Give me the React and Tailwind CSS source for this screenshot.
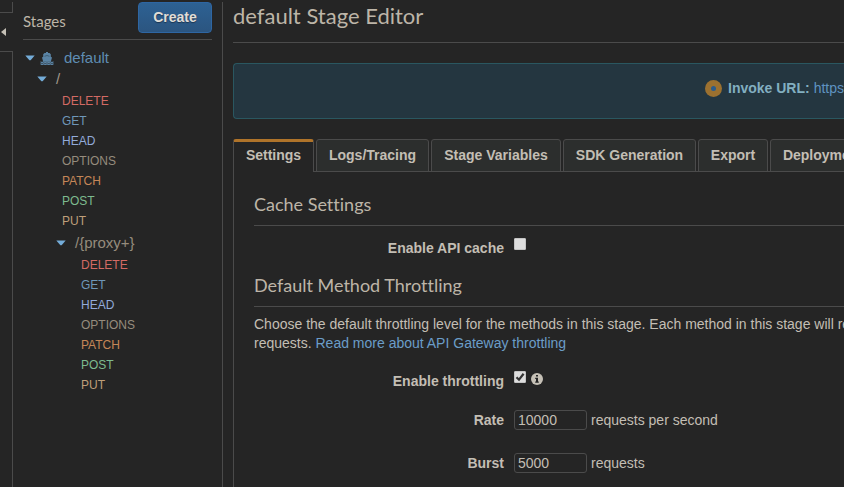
import React from "react";

const METHODS = [
  ["DELETE", "text-[#d36a64]"],
  ["GET", "text-[#6f97b8]"],
  ["HEAD", "text-[#92abda]"],
  ["OPTIONS", "text-[#958c7d]"],
  ["PATCH", "text-[#c58758]"],
  ["POST", "text-[#7dbb8f]"],
  ["PUT", "text-[#bf9f7a]"],
];

function Caret() {
  return (
    <svg width="10" height="6" viewBox="0 0 10 6" className="shrink-0">
      <path d="M0.3 0.4h9.4L5.6 5.2H4.4z" fill="#74acd8" />
    </svg>
  );
}

function Ship() {
  return (
    <svg width="14" height="13" viewBox="0 0 14 13" className="shrink-0" fill="#5a84a5">
      <path d="M6 0h2v1h1.5l1.3 1.2v2.6l1.2.8-1.2 4.2H3.2L2 5.6l1.2-.8V2.2L4.500 1H6z" />
      <path d="M.5 9.2q1.6 1 3.2 0 1.6 1 3.3 0 1.6 1 3.3 0 1.6 1 3.2 0v1.3q-1.6 1-3.2 0-1.7 1-3.3 0-1.7 1-3.3 0-1.6 1-3.2 0z" />
      <path d="M.5 11.100q1.6 1 3.2 0 1.6 1 3.3 0 1.6 1 3.3 0 1.6 1 3.2 0v1.4q-1.6 1-3.2 0-1.7 1-3.3 0-1.7 1-3.3 0-1.6 1-3.2 0z" />
      <path d="M4.500 4.300L7 3.500l2.500.8" fill="none" stroke="#2f4454" strokeWidth=".6" />
    </svg>
  );
}

function Methods({ indent }) {
  return (
    <ul className={indent}>
      {METHODS.map(([name, color]) => (
        <li key={name} className={`h-5 text-[12px] leading-5 ${color}`}>{name}</li>
      ))}
    </ul>
  );
}

function Tab({ children, active, width }) {
  return active ? (
    <div className={`${width} h-[33px] shrink-0 rounded-t-[3px] border-x border-t-[3px] border-x-[#4b4b4b] border-t-[#b0742a] bg-[#252525] pt-[3px] text-center leading-5`}>
      {children}
    </div>
  ) : (
    <div className={`${width} h-[33px] shrink-0 rounded-t-[3px] border border-[#4b4b4b] bg-[#2c2e2d] pt-[5px] text-center leading-5`}>
      {children}
    </div>
  );
}

function Heading({ children, className }) {
  return (
    <h2 className={`border-b border-[#4b4b4b] font-['Lato',sans-serif] text-[18px] text-[#bdb5a8] [font-variant-ligatures:none] ${className}`}>
      {children}
    </h2>
  );
}

function Checkbox({ checked }) {
  return (
    <span className="block size-[12px] shrink-0 rounded-[1px] border border-[#c4c4c4] bg-[#dddddd]">
      {checked && (
        <svg width="10" height="10" viewBox="0 0 10 10">
          <path d="M1.500 5.200L4 7.700 8.600 1.800" fill="none" stroke="#333" strokeWidth="2.200" />
        </svg>
      )}
    </span>
  );
}

function Field({ label, value, unit, className }) {
  return (
    <div className={`flex h-5 items-center ${className}`}>
      <span className="w-[250px] text-right font-bold">{label}</span>
      <span className="ml-[10px] h-5 w-[73px] rounded-[3px] border border-[#4b4b4b] pl-[3px] leading-[18px]">{value}</span>
      <span className="ml-1">{unit}</span>
    </div>
  );
}

export default function App() {
  return (
    <div className="flex h-[487px] w-[844px] overflow-hidden bg-[#252525] font-['Liberation_Sans',Arial,sans-serif] text-[14px] text-[#c3beb4]">
      <div className="flex w-[13px] shrink-0 flex-col pt-[2px]">
        <div className="h-[11px] border-r border-b border-[#4b4b4b]" />
        <div className="flex h-[38px] items-center pl-px">
          <svg width="5" height="8" viewBox="0 0 5 8">
            <path d="M5 0v8L0 4z" fill="#c5c0b6" />
          </svg>
        </div>
        <div className="flex-1 border-t border-r border-[#4b4b4b]" />
      </div>

      <aside className="mt-[2px] w-[210px] shrink-0 border-r border-[#4b4b4b] px-[10px]">
        <div className="flex h-[38px] justify-between border-b border-[#4b4b4b]">
          <h3 className="pt-[9px] font-['Lato',sans-serif] text-[15px] leading-5 text-[#bdb5a8]">Stages</h3>
          <button className="h-[31px] w-[74px] rounded-[4px] border border-[#2e66a3] bg-linear-to-b from-[#2d6193] to-[#2b5580] font-bold text-[#e0ddd6] [text-shadow:0_1px_1px_rgba(0,0,0,0.4)]">
            Create
          </button>
        </div>
        <div className="mt-2 flex h-5 items-center pl-[2px] text-[15px] text-[#5f8db3]">
          <Caret />
          <span className="ml-[5px]"><Ship /></span>
          <span className="ml-[10px]">default</span>
        </div>
        <div className="flex h-[23px] items-center pb-px pl-[14px] text-[15px] text-[#a0978a]">
          <Caret />
          <span className="ml-[9px]">/</span>
        </div>
        <Methods indent="pl-[39px]" />
        <div className="mt-px flex h-[22px] items-center pl-[33px] text-[15px] text-[#958c7d]">
          <Caret />
          <span className="ml-[9px]">/{"{proxy+}"}</span>
        </div>
        <Methods indent="mt-px pl-[58px]" />
      </aside>

      <main className="w-[640px] shrink-0 pl-[10px]">
        <h1 className="h-[43px] border-b border-[#4b4b4b] pt-[2px] font-['Lato',sans-serif] text-[22px] leading-7 text-[#bdb5a8]">
          default Stage Editor
        </h1>
        <div className="mt-5 flex h-[56px] items-center rounded-l-[4px] border border-r-0 border-[#2a5760] bg-[#243640] pb-[6px] pl-[471px] whitespace-nowrap">
          <span className="flex size-[17px] shrink-0 items-center justify-center rounded-full bg-[#9c7130]">
            <span className="size-[5px] rounded-full bg-[#2b5c8c]" />
          </span>
          <span className="ml-[6px] font-bold text-[#82afc0]">Invoke URL:</span>
          <span className="ml-1 text-[#5f93c0]">https://</span>
        </div>

        <div className="mt-5 flex h-[33px] gap-[2px] font-bold whitespace-nowrap">
          <Tab active width="w-[81px]">Settings</Tab>
          <Tab width="w-[113px]">Logs/Tracing</Tab>
          <Tab width="w-[130px]">Stage Variables</Tab>
          <Tab width="w-[133px]">SDK Generation</Tab>
          <Tab width="w-[70px]">Export</Tab>
          <Tab width="w-[158px]">Deployment History</Tab>
        </div>
        <div className="-mt-px flex">
          <div className="h-px w-px bg-[#4b4b4b]" />
          <div className="h-px w-[79px]" />
          <div className="h-px flex-1 bg-[#4b4b4b]" />
        </div>

        <section className="h-[316px] border-l border-[#4b4b4b] pl-5">
          <Heading className="h-[54px] pt-[20px] leading-6">Cache Settings</Heading>
          <div className="mt-[12px] flex h-5">
            <span className="w-[250px] text-right leading-5 font-bold">Enable API cache</span>
            <span className="ml-[10px]"><Checkbox /></span>
          </div>
          <Heading className="mt-[15px] h-[34px] leading-6">Default Method Throttling</Heading>
          <p className="mt-[8px] leading-[19px] whitespace-nowrap">
            Choose the default throttling level for the methods in this stage. Each method in this stage will respect
            <br />
            requests. <a className="text-[#6b9dc8]">Read more about API Gateway throttling</a>
          </p>
          <div className="mt-[18px] flex h-5">
            <span className="w-[250px] text-right leading-5 font-bold">Enable throttling</span>
            <span className="ml-[10px]"><Checkbox checked /></span>
            <svg width="12" height="12" viewBox="0 0 12 12" className="mt-[2px] ml-[5px]">
              <circle cx="6" cy="6" r="6" fill="#c5c0b6" />
              <path d="M5 2h2v1.600H5zM4.200 4.700H7v3.700h.8V9.700H4.200V8.400H5V6h-.8z" fill="#252525" />
            </svg>
          </div>
          <Field label="Rate" value="10000" unit="requests per second" className="mt-[19px]" />
          <Field label="Burst" value="5000" unit="requests" className="mt-[23px]" />
        </section>
      </main>
    </div>
  );
}
